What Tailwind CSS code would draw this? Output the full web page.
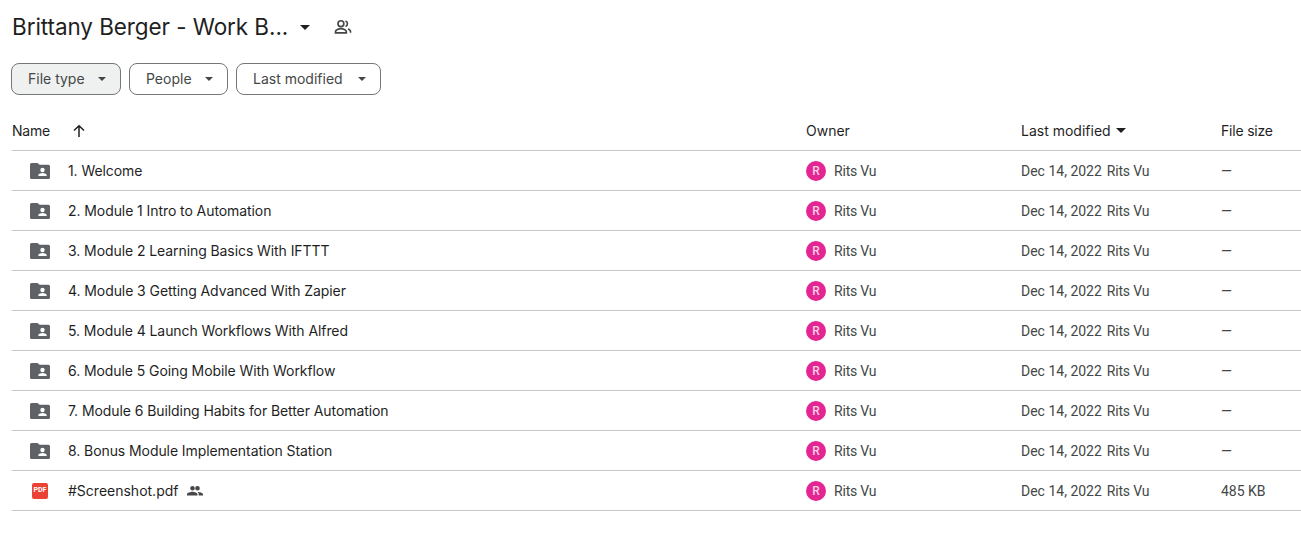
<!DOCTYPE html>
<html lang="en">
<head>
<meta charset="UTF-8">
<title>Brittany Berger - Work B...</title>
<script src="https://cdn.jsdelivr.net/npm/@tailwindcss/browser@4"></script>
</head>
<body class="bg-white font-['Roboto',sans-serif] text-[#1f1f1f] overflow-hidden">
<svg class="hidden">
  <symbol id="shared-folder" viewBox="0 0 20 16">
    <path fill="#5f6368" d="M1.500 0h6l2 1.800h9A1.500 1.500 0 0 1 20 3.300v11.200a1.500 1.500 0 0 1-1.500 1.500h-17A1.500 1.500 0 0 1 0 14.500v-13A1.500 1.500 0 0 1 1.500 0z"/>
    <circle fill="#fff" cx="12.500" cy="7" r="2.200"/>
    <path fill="#fff" d="M8.300 13v-.8c0-1.500 2.800-2.200 4.200-2.200s4.200.7 4.200 2.200v.8z"/>
  </symbol>
</svg>

<!-- Title -->
<div class="h-[63px] pl-3 flex items-start pt-[11px]">
  <span class="text-[22.500px] leading-8 font-['Inter'] tracking-[-0.08px]">Brittany Berger - Work B...</span>
  <svg class="w-[10px] h-[5px] ml-3 mt-[14px]" viewBox="0 0 10 5"><path fill="#1f1f1f" d="M0 0h10L5 5z"/></svg>
  <svg class="w-5 h-5 ml-[23px] mt-[6px]" viewBox="0 0 24 24" fill="none" stroke="#444746" stroke-width="2"><circle cx="9.500" cy="8" r="3.500"/><path d="M3 19v-1.500c0-2 4-3.500 6.500-3.500s6.500 1.500 6.500 3.500V19z"/><path d="M15 4.700a3.500 3.500 0 0 1 0 6.600M18 14.300c1.800.6 3 1.700 3 3.200V19"/></svg>
</div>

<!-- Filters -->
<div class="flex gap-2 pl-[11px] h-8 text-sm text-[#444746] font-['Inter']">
  <button class="w-[110px] rounded-lg border border-[#747775] bg-[#eff1f1] flex items-center pl-4">File type<svg class="w-2 h-1 ml-auto mr-[14px]" viewBox="0 0 8 4"><path fill="#444746" d="M0 0h8L4 4z"/></svg></button>
  <button class="w-[99px] rounded-lg border border-[#747775] flex items-center pl-4">People<svg class="w-2 h-1 ml-auto mr-[14px]" viewBox="0 0 8 4"><path fill="#444746" d="M0 0h8L4 4z"/></svg></button>
  <button class="w-[145px] rounded-lg border border-[#747775] flex items-center pl-4">Last modified<svg class="w-2 h-1 ml-auto mr-[14px]" viewBox="0 0 8 4"><path fill="#444746" d="M0 0h8L4 4z"/></svg></button>
</div>

<!-- List -->
<div class="ml-3 mt-4 text-sm">
  <div class="grid grid-cols-[794px_215px_200px_1fr] h-10 items-center border-b border-[#c7c7c7] font-['Inter'] text-[#1f1f1f]">
    <div class="flex items-center tracking-[-0.2px]">Name
      <svg class="w-4 h-4 ml-[21px]" viewBox="0 0 16 16" fill="none" stroke="#1f1f1f" stroke-width="1.500"><path d="M8 14V3M3 7.500 8 2.800l5 4.700"/></svg>
    </div>
    <div>Owner</div>
    <div class="flex items-center">Last modified<svg class="w-[10px] h-[5px] ml-[5px]" viewBox="0 0 10 5"><path fill="#1f1f1f" d="M0 0h10L5 5z"/></svg></div>
    <div class="tracking-[-0.2px]">File size</div>
  </div>

  <div id="rows">
    <div class="grid grid-cols-[794px_215px_200px_1fr] h-10 items-center border-b border-[#c7c7c7]">
      <div class="flex items-center pl-[18px] font-['Inter'] tracking-[-0.08px]"><svg class="w-5 h-4 mr-[18px]"><use href="#shared-folder"/></svg>1. Welcome</div>
      <div class="flex items-center text-[#444746] tracking-[-0.2px]"><span class="w-5 h-5 mr-2 rounded-full bg-[#e52592] text-[#f9d0e6] text-xs font-medium flex items-center justify-center">R</span>Rits Vu</div>
      <div class="text-[#444746]">Dec 14, 2022<span class="ml-[5px] tracking-[-0.2px]">Rits Vu</span></div>
      <div class="text-[#444746]">—</div>
    </div>
    <div class="grid grid-cols-[794px_215px_200px_1fr] h-10 items-center border-b border-[#c7c7c7]">
      <div class="flex items-center pl-[18px] font-['Inter'] tracking-[-0.08px]"><svg class="w-5 h-4 mr-[18px]"><use href="#shared-folder"/></svg>2. Module 1 Intro to Automation</div>
      <div class="flex items-center text-[#444746] tracking-[-0.2px]"><span class="w-5 h-5 mr-2 rounded-full bg-[#e52592] text-[#f9d0e6] text-xs font-medium flex items-center justify-center">R</span>Rits Vu</div>
      <div class="text-[#444746]">Dec 14, 2022<span class="ml-[5px] tracking-[-0.2px]">Rits Vu</span></div>
      <div class="text-[#444746]">—</div>
    </div>
    <div class="grid grid-cols-[794px_215px_200px_1fr] h-10 items-center border-b border-[#c7c7c7]">
      <div class="flex items-center pl-[18px] font-['Inter'] tracking-[-0.08px]"><svg class="w-5 h-4 mr-[18px]"><use href="#shared-folder"/></svg>3. Module 2 Learning Basics With IFTTT</div>
      <div class="flex items-center text-[#444746] tracking-[-0.2px]"><span class="w-5 h-5 mr-2 rounded-full bg-[#e52592] text-[#f9d0e6] text-xs font-medium flex items-center justify-center">R</span>Rits Vu</div>
      <div class="text-[#444746]">Dec 14, 2022<span class="ml-[5px] tracking-[-0.2px]">Rits Vu</span></div>
      <div class="text-[#444746]">—</div>
    </div>
    <div class="grid grid-cols-[794px_215px_200px_1fr] h-10 items-center border-b border-[#c7c7c7]">
      <div class="flex items-center pl-[18px] font-['Inter'] tracking-[-0.08px]"><svg class="w-5 h-4 mr-[18px]"><use href="#shared-folder"/></svg>4. Module 3 Getting Advanced With Zapier</div>
      <div class="flex items-center text-[#444746] tracking-[-0.2px]"><span class="w-5 h-5 mr-2 rounded-full bg-[#e52592] text-[#f9d0e6] text-xs font-medium flex items-center justify-center">R</span>Rits Vu</div>
      <div class="text-[#444746]">Dec 14, 2022<span class="ml-[5px] tracking-[-0.2px]">Rits Vu</span></div>
      <div class="text-[#444746]">—</div>
    </div>
    <div class="grid grid-cols-[794px_215px_200px_1fr] h-10 items-center border-b border-[#c7c7c7]">
      <div class="flex items-center pl-[18px] font-['Inter'] tracking-[-0.08px]"><svg class="w-5 h-4 mr-[18px]"><use href="#shared-folder"/></svg>5. Module 4 Launch Workflows With Alfred</div>
      <div class="flex items-center text-[#444746] tracking-[-0.2px]"><span class="w-5 h-5 mr-2 rounded-full bg-[#e52592] text-[#f9d0e6] text-xs font-medium flex items-center justify-center">R</span>Rits Vu</div>
      <div class="text-[#444746]">Dec 14, 2022<span class="ml-[5px] tracking-[-0.2px]">Rits Vu</span></div>
      <div class="text-[#444746]">—</div>
    </div>
    <div class="grid grid-cols-[794px_215px_200px_1fr] h-10 items-center border-b border-[#c7c7c7]">
      <div class="flex items-center pl-[18px] font-['Inter'] tracking-[-0.08px]"><svg class="w-5 h-4 mr-[18px]"><use href="#shared-folder"/></svg>6. Module 5 Going Mobile With Workflow</div>
      <div class="flex items-center text-[#444746] tracking-[-0.2px]"><span class="w-5 h-5 mr-2 rounded-full bg-[#e52592] text-[#f9d0e6] text-xs font-medium flex items-center justify-center">R</span>Rits Vu</div>
      <div class="text-[#444746]">Dec 14, 2022<span class="ml-[5px] tracking-[-0.2px]">Rits Vu</span></div>
      <div class="text-[#444746]">—</div>
    </div>
    <div class="grid grid-cols-[794px_215px_200px_1fr] h-10 items-center border-b border-[#c7c7c7]">
      <div class="flex items-center pl-[18px] font-['Inter'] tracking-[-0.08px]"><svg class="w-5 h-4 mr-[18px]"><use href="#shared-folder"/></svg>7. Module 6 Building Habits for Better Automation</div>
      <div class="flex items-center text-[#444746] tracking-[-0.2px]"><span class="w-5 h-5 mr-2 rounded-full bg-[#e52592] text-[#f9d0e6] text-xs font-medium flex items-center justify-center">R</span>Rits Vu</div>
      <div class="text-[#444746]">Dec 14, 2022<span class="ml-[5px] tracking-[-0.2px]">Rits Vu</span></div>
      <div class="text-[#444746]">—</div>
    </div>
    <div class="grid grid-cols-[794px_215px_200px_1fr] h-10 items-center border-b border-[#c7c7c7]">
      <div class="flex items-center pl-[18px] font-['Inter'] tracking-[-0.08px]"><svg class="w-5 h-4 mr-[18px]"><use href="#shared-folder"/></svg>8. Bonus Module Implementation Station</div>
      <div class="flex items-center text-[#444746] tracking-[-0.2px]"><span class="w-5 h-5 mr-2 rounded-full bg-[#e52592] text-[#f9d0e6] text-xs font-medium flex items-center justify-center">R</span>Rits Vu</div>
      <div class="text-[#444746]">Dec 14, 2022<span class="ml-[5px] tracking-[-0.2px]">Rits Vu</span></div>
      <div class="text-[#444746]">—</div>
    </div>
    <div class="grid grid-cols-[794px_215px_200px_1fr] h-10 items-center border-b border-[#c7c7c7]">
      <div class="flex items-center pl-5 font-['Inter']">
        <span class="w-4 h-4 mr-5 rounded-[2px] bg-[#ea4335] text-white text-[7px] leading-none font-bold flex items-center justify-center font-['Roboto']">PDF</span>#Screenshot.pdf
        <svg class="w-4 h-4 ml-[9px]" viewBox="0 0 16 16"><path fill="#444746" d="M5.500 7.500a2.300 2.300 0 1 0 0-4.600 2.300 2.300 0 0 0 0 4.600zm5 0a2.300 2.300 0 1 0 0-4.600 2.300 2.300 0 0 0 0 4.600zM0 12.500v-1.200C0 9.700 3.500 8.700 5.500 8.700s5 1 5 2.600v1.200zm11.700 0v-1.200c0-1-.5-1.700-1.200-2.300 2 0 5.500.8 5.500 2.300v1.200z"/></svg>
      </div>
      <div class="flex items-center text-[#444746] tracking-[-0.2px]"><span class="w-5 h-5 mr-2 rounded-full bg-[#e52592] text-[#f9d0e6] text-xs font-medium flex items-center justify-center">R</span>Rits Vu</div>
      <div class="text-[#444746]">Dec 14, 2022<span class="ml-[5px] tracking-[-0.2px]">Rits Vu</span></div>
      <div class="text-[#444746]">485 KB</div>
    </div>
  </div>
</div>
</body>
</html>
